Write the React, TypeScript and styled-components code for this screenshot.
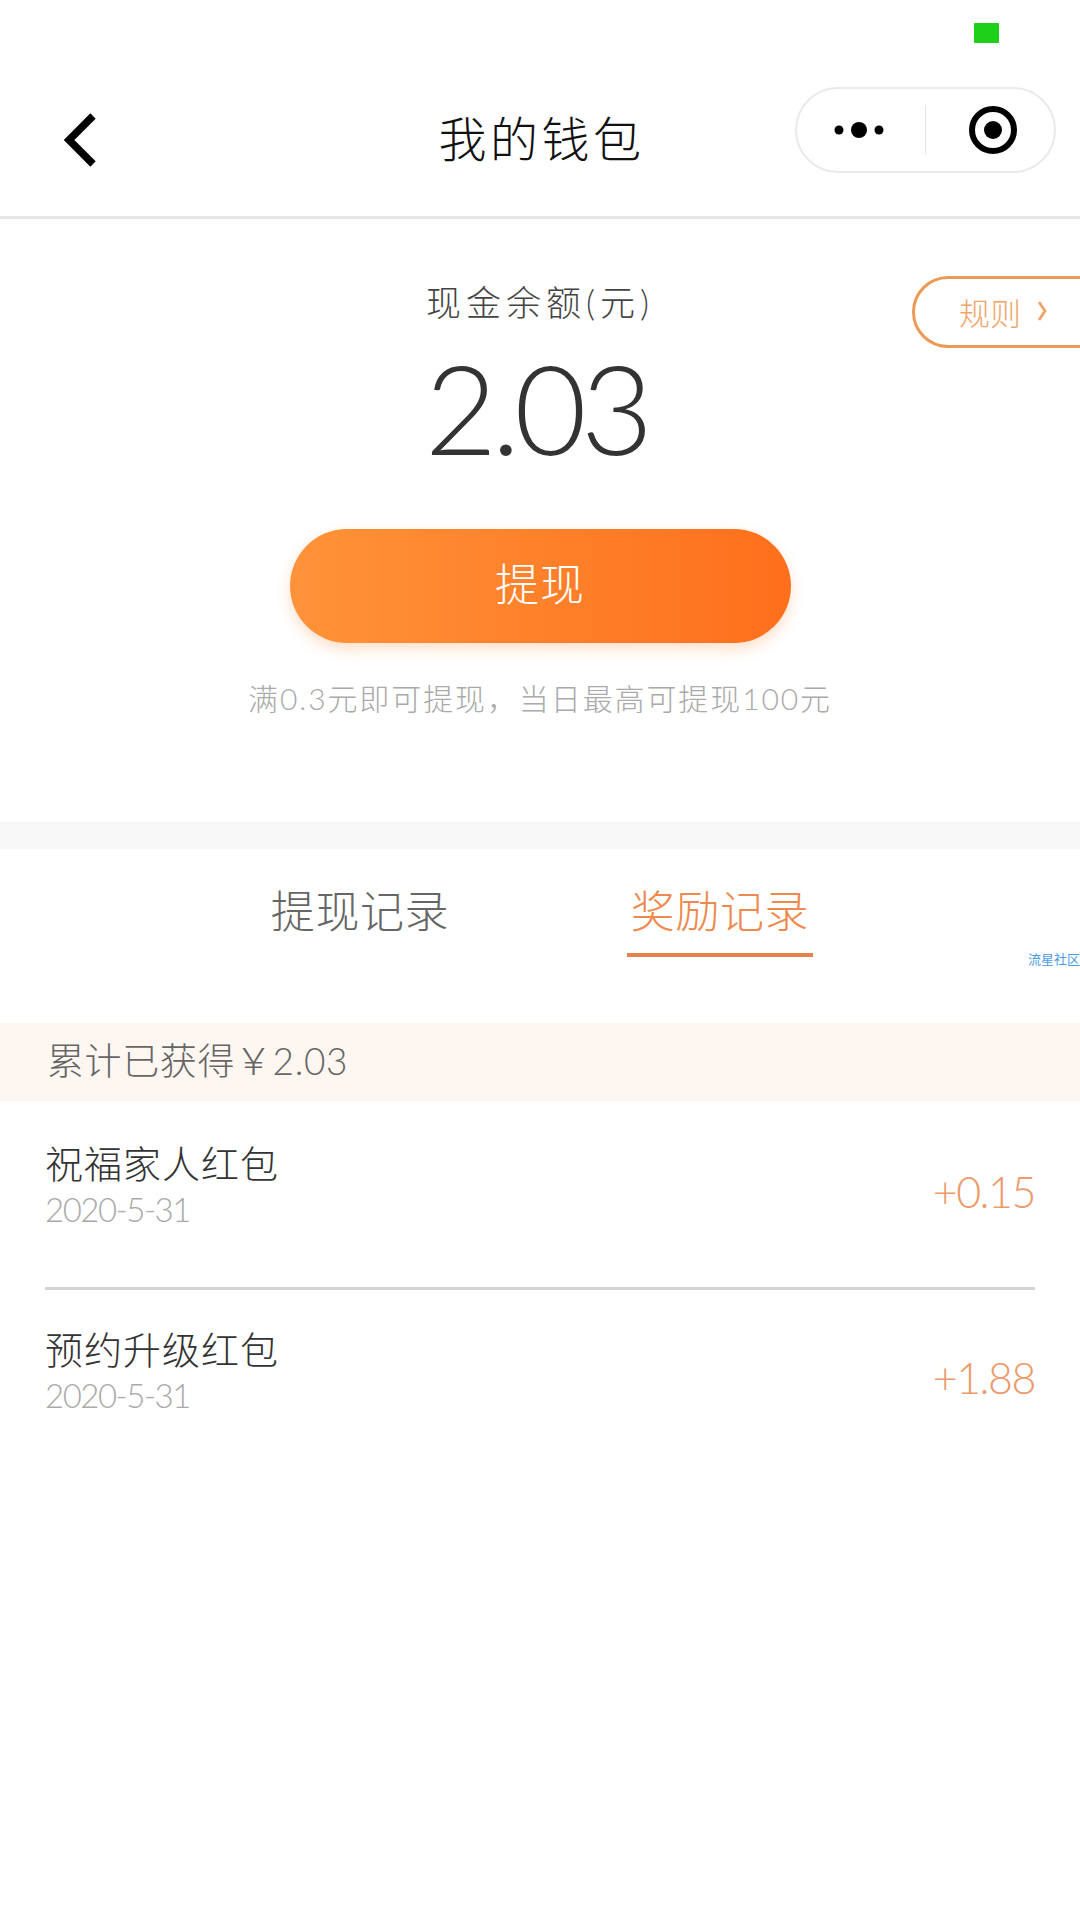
import React from "react";
import styled, { createGlobalStyle } from "styled-components";

const Global = createGlobalStyle`
  html, body { margin: 0; padding: 0; background: #fff; }
  body { font-family: Lato, "Noto Sans CJK SC", sans-serif; font-weight: 300; }
  * { box-sizing: border-box; }
`;
const Page = styled.div`
  width: 1080px; height: 1920px; background: #fff; overflow: hidden;
  display: flex; flex-direction: column;
`;
const StatusBar = styled.div`
  height: 87px; padding: 23px 81px 0 0; display: flex; justify-content: flex-end; align-items: flex-start;
`;
const Signal = styled.div`width: 25px; height: 20px; background: #1ed01a; border-radius: 1px;`;
const NavBar = styled.header`
  height: 132px; padding: 0 24px 0 64px; border-bottom: 3px solid #e5e5e5;
  display: grid; grid-template-columns: 261px 1fr 261px; align-items: start;
`;
const Back = styled.svg`width: 32px; height: 54px; margin-top: 26px;`;
const Title = styled.h1`
  margin: 20px 0 0 -37px; font-size: 48px; line-height: 64px; font-weight: 300; color: #111;
  letter-spacing: 3.5px; text-align: center;
`;
const Capsule = styled.div`
  width: 261px; height: 86px; border: 2px solid #eaeaea; border-radius: 43px;
  display: grid; grid-template-columns: 128px 1fr; align-items: center;
`;
const MoreIcon = styled.svg`width: 52px; height: 20px; justify-self: center; margin-left: -4px;`;
const TargetCell = styled.div`
  height: 50px; border-left: 1px solid #e6e6e6; display: flex; align-items: center; justify-content: center;
  padding-left: 6px;
`;
const TargetIcon = styled.svg`width: 50px; height: 50px;`;
const Balance = styled.section`
  position: relative; height: 603px; display: flex; flex-direction: column; align-items: center;
`;
const BalanceLabel = styled.div`
  margin-top: 60px; font-size: 35px; line-height: 46px; color: #444; letter-spacing: 5px;
`;
const Amount = styled.div`
  margin: 17px 8px 0 0; font-size: 125px; line-height: 130px; color: #333; letter-spacing: -6px;
`;
const Rule = styled.div`
  position: absolute; top: 57px; right: -40px; width: 208px; height: 72px;
  border: 3px solid #ec9a55; border-radius: 36px; padding: 0 0 2px 44px;
  display: flex; align-items: center; gap: 16px; color: #f0a468; font-size: 31px;
`;
const RuleChevron = styled.svg`width: 10px; height: 22px;`;
const Withdraw = styled.button`
  margin-top: 57px; width: 501px; height: 114px; border: 0; border-radius: 57px; padding: 0 0 8px;
  background: linear-gradient(90deg, #ff9339, #ff6f1c); color: #fff;
  font: 300 44px "Noto Sans CJK SC", sans-serif; letter-spacing: 1px;
  box-shadow: 0 6px 14px rgba(255, 140, 60, .28);
`;
const Hint = styled.div`
  margin-top: 33px; font-size: 30px; line-height: 44px; color: #aaa; letter-spacing: 1.9px;
`;
const Band = styled.div`height: 27px; background: #f8f8f8;`;
const Tabs = styled.nav`
  position: relative; height: 174px; display: flex; align-items: flex-start; padding-left: 267px; gap: 174px;
`;
const Tab = styled.div<{ $active?: boolean }>`
  width: 186px; height: 108px; padding-top: 33px; text-align: center;
  font-size: 44px; line-height: 58px; letter-spacing: .6px;
  color: ${(p) => (p.$active ? "#ee8a4e" : "#666")};
  border-bottom: 4px solid ${(p) => (p.$active ? "#e8804a" : "transparent")};
`;
const Watermark = styled.span`
  position: absolute; right: 0; top: 102px; font-size: 13px; line-height: 16px; color: #4a9ae0; font-weight: 400;
`;
const Banner = styled.div`
  height: 78px; padding: 0 0 6px 47px; background: #fef6f0; display: flex; align-items: center;
  font-size: 37px; color: #666; letter-spacing: .6px;
`;
const List = styled.div`padding: 0 45px;`;
const Row = styled.div`
  height: 186px; display: flex; align-items: center; justify-content: space-between;
  & + & { border-top: 3px solid #d4d4d4; padding-bottom: 3px; }
`;
const RowText = styled.div`display: flex; flex-direction: column; margin-bottom: 21px;`;
const RowTitle = styled.div`font-size: 38px; line-height: 50px; color: #333; letter-spacing: 1px;`;
const RowDate = styled.div`font-size: 33px; line-height: 42px; color: #aaa; letter-spacing: -1.5px;`;
const RowAmount = styled.div`font-size: 43px; line-height: 56px; color: #ec9a6a; letter-spacing: -1.5px; margin-bottom: 5px;`;

const records = [
  { title: "祝福家人红包", date: "2020-5-31", amount: "+0.15" },
  { title: "预约升级红包", date: "2020-5-31", amount: "+1.88" },
];

export default function App() {
  return (
    <Page>
      <Global />
      <StatusBar><Signal /></StatusBar>
      <NavBar>
        <Back viewBox="0 0 32 54">
          <path d="M29 3 L5 27 L29 51" fill="none" stroke="#000" strokeWidth="7.5" />
        </Back>
        <Title>我的钱包</Title>
        <Capsule>
          <MoreIcon viewBox="0 0 52 20">
            <circle cx="6" cy="10" r="4.5" fill="#000" />
            <circle cx="26" cy="10" r="8" fill="#000" />
            <circle cx="46" cy="10" r="4.5" fill="#000" />
          </MoreIcon>
          <TargetCell>
            <TargetIcon viewBox="0 0 50 50">
              <circle cx="25" cy="25" r="21" fill="none" stroke="#000" strokeWidth="6" />
              <circle cx="25" cy="25" r="9" fill="#000" />
            </TargetIcon>
          </TargetCell>
        </Capsule>
      </NavBar>
      <Balance>
        <BalanceLabel>现金余额(元)</BalanceLabel>
        <Amount>2.03</Amount>
        <Rule>
          规则
          <RuleChevron viewBox="0 0 10 22">
            <path d="M2 2 L8 11 L2 20" fill="none" stroke="#f0a468" strokeWidth="2.8" />
          </RuleChevron>
        </Rule>
        <Withdraw>提现</Withdraw>
        <Hint>满0.3元即可提现，当日最高可提现100元</Hint>
      </Balance>
      <Band />
      <Tabs>
        <Tab>提现记录</Tab>
        <Tab $active>奖励记录</Tab>
        <Watermark>流星社区</Watermark>
      </Tabs>
      <Banner>累计已获得￥2.03</Banner>
      <List>
        {records.map((r) => (
          <Row key={r.title}>
            <RowText>
              <RowTitle>{r.title}</RowTitle>
              <RowDate>{r.date}</RowDate>
            </RowText>
            <RowAmount>{r.amount}</RowAmount>
          </Row>
        ))}
      </List>
    </Page>
  );
}
